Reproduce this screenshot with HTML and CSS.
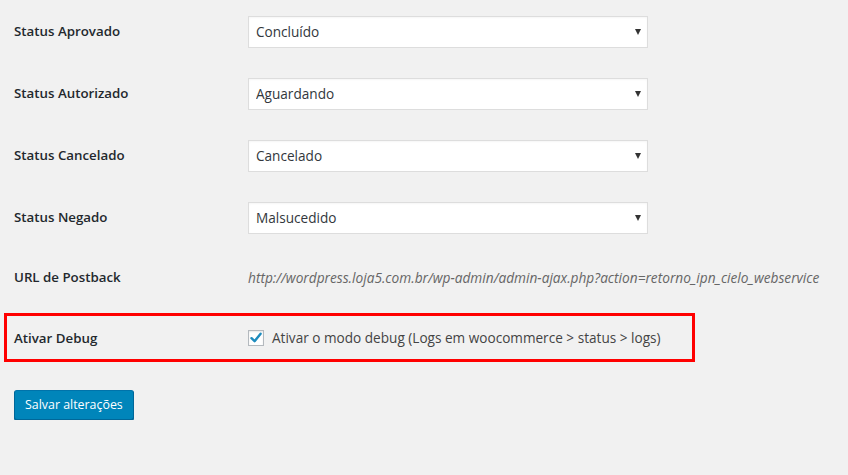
FILE: index.html
```html
<!DOCTYPE html>
<html lang="pt-BR">
<head>
  <meta charset="UTF-8" />
  <meta name="viewport" content="width=device-width, initial-scale=1.0"/>
  <title>Configurações Cielo</title>
  <link rel="stylesheet" href="styles.css">
</head>
<body>
  <div class="form-table">
    <div class="row">
      <label class="label" for="statusAprovado">Status Aprovado</label>
      <div class="select-wrap">
        <select id="statusAprovado">
          <option>Concluído</option>
        </select>
      </div>
    </div>
    <div class="row">
      <label class="label" for="statusAutorizado">Status Autorizado</label>
      <div class="select-wrap">
        <select id="statusAutorizado">
          <option>Aguardando</option>
        </select>
      </div>
    </div>
    <div class="row">
      <label class="label" for="statusCancelado">Status Cancelado</label>
      <div class="select-wrap">
        <select id="statusCancelado">
          <option>Cancelado</option>
        </select>
      </div>
    </div>
    <div class="row">
      <label class="label" for="statusNegado">Status Negado</label>
      <div class="select-wrap">
        <select id="statusNegado">
          <option>Malsucedido</option>
        </select>
      </div>
    </div>
    <div class="row row-url">
      <div class="label">URL de Postback</div>
      <div class="url-text">http://wordpress.loja5.com.br/wp-admin/admin-ajax.php?action=retorno_ipn_cielo_webservice</div>
    </div>
    <div class="row row-debug">
      <div class="label">Ativar Debug</div>
      <label class="check">
        <span class="check-box">
          <svg width="14" height="14" viewBox="0 0 14 14">
            <path d="M2.5 7.2 L5.6 10.2 L11.6 2.8" fill="none" stroke="#1e8cbe" stroke-width="2.4" stroke-linecap="round" stroke-linejoin="round"/>
          </svg>
        </span>
        Ativar o modo debug (Logs em woocommerce &gt; status &gt; logs)
      </label>
    </div>
  </div>

  <div class="submit">
    <button class="button-primary">Salvar alterações</button>
  </div>
</body>
</html>
```

FILE: styles.css
```css
body {
  margin: 0;
  padding: 0 0 0 14px;
  background-color: #f1f1f1;
  color: #444;
  font-family: "Open Sans", "Noto Sans", sans-serif;
  font-size: 14px;
}

.form-table {
  display: flex;
  flex-direction: column;
}

.row {
  display: flex;
  align-items: center;
  padding: 16px 0 14px;
}

.label {
  width: 234px;
  flex: none;
  font-weight: 600;
  color: #23282d;
  font-size: 13.3px;
  margin-top: -3px;
}

.select-wrap {
  position: relative;
  width: 400px;
}

.select-wrap select {
  appearance: none;
  -webkit-appearance: none;
  display: block;
  width: 100%;
  height: 32px;
  margin: 0;
  padding: 0 24px 2px 7px;
  border: 1px solid #ddd;
  border-radius: 0;
  background-color: #fff;
  color: #32373c;
  font-family: inherit;
  font-size: 13.6px;
  box-shadow: inset 0 1px 2px rgba(0, 0, 0, 0.04);
}

.select-wrap::after {
  content: "";
  position: absolute;
  right: 7px;
  top: 13px;
  border-left: 3.5px solid transparent;
  border-right: 3.5px solid transparent;
  border-top: 6px solid #333;
  pointer-events: none;
}

.row-url {
  padding: 0;
  height: 60px;
}

.url-text {
  font-style: italic;
  color: #666;
  font-size: 13.7px;
  white-space: nowrap;
  margin-top: -2px;
}

.row-debug {
  margin: 5px 0 0 -10px;
  padding: 0 0 0 7px;
  width: 678px;
  height: 43px;
  border: 3px solid #ff0000;
}

.row-debug .label {
  margin-top: 0;
}

.check {
  display: flex;
  align-items: center;
  gap: 8px;
  color: #444;
  font-size: 13.6px;
}

.check-box {
  display: flex;
  align-items: center;
  justify-content: center;
  width: 14px;
  height: 14px;
  border: 1px solid #b4b9be;
  background-color: #fff;
  box-shadow: inset 0 1px 2px rgba(0, 0, 0, 0.1);
}

.submit {
  padding-top: 28px;
}

.button-primary {
  height: 30px;
  padding: 0 10px 2px;
  background-color: #0085ba;
  border: 1px solid #0073aa;
  border-color: #0073aa #006799 #006799;
  border-radius: 3px;
  box-shadow: 0 1px 0 #006799;
  color: #fff;
  font-family: inherit;
  font-size: 12.4px;
  cursor: pointer;
}
```
